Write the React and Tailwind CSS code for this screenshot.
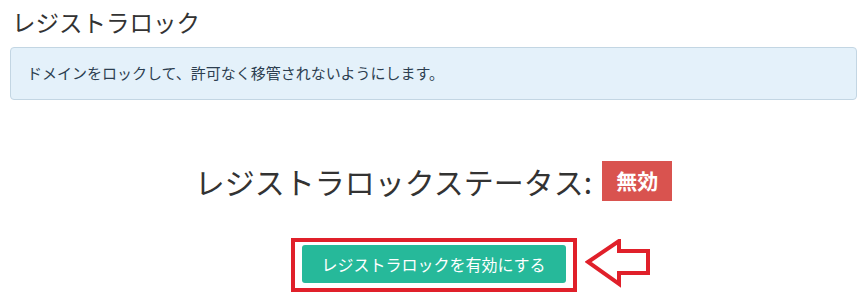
import React from "react";

const jp = { fontFamily: '"Noto Sans CJK JP", "Noto Sans", sans-serif' };

const Arrow = () => (
  <svg width="66" height="50" viewBox="0 0 66 50" className="absolute left-full top-[1px] ml-[8px]">
    <polygon
      points="3,23 34,2 34,12 63,12 63,34 34,34 34,45"
      fill="white"
      stroke="#e0202a"
      strokeWidth="4"
      strokeLinejoin="miter"
    />
  </svg>
);

export default function App() {
  return (
    <div className="w-[867px] h-[298px] bg-white px-[10px] overflow-hidden text-[#333]" style={jp}>
      {/* Title */}
      <h1 className="pl-[2px] pt-[5px] text-[23.5px] leading-[34px] font-normal">
        レジストラロック
      </h1>

      {/* Info alert */}
      <div className="mt-[8px] h-[53px] flex items-center rounded-[4px] border border-[#c3d6e3] bg-[#e4f1fa] px-[16px] text-[15px] text-[#2c3e50]">
        ドメインをロックして、許可なく移管されないようにします。
      </div>

      {/* Status */}
      <div className="mt-[61px] flex items-center justify-center">
        <span className="text-[30px] leading-[40px]">レジストラロックステータス:</span>
        <span className="ml-[10px] h-[40px] px-[14px] flex items-center bg-[#d9534f] text-white text-[21px] font-bold">
          無効
        </span>
      </div>

      {/* Action */}
      <div className="mt-[37px] flex justify-center">
        <div className="relative">
          <div className="border-4 border-[#e0202a] px-[7px] pt-[3px] pb-[5px]">
            <button className="h-[38px] w-[264px] rounded-[3px] bg-[#26b99a] text-white text-[16px]">
              レジストラロックを有効にする
            </button>
          </div>
          <Arrow />
        </div>
      </div>
    </div>
  );
}
